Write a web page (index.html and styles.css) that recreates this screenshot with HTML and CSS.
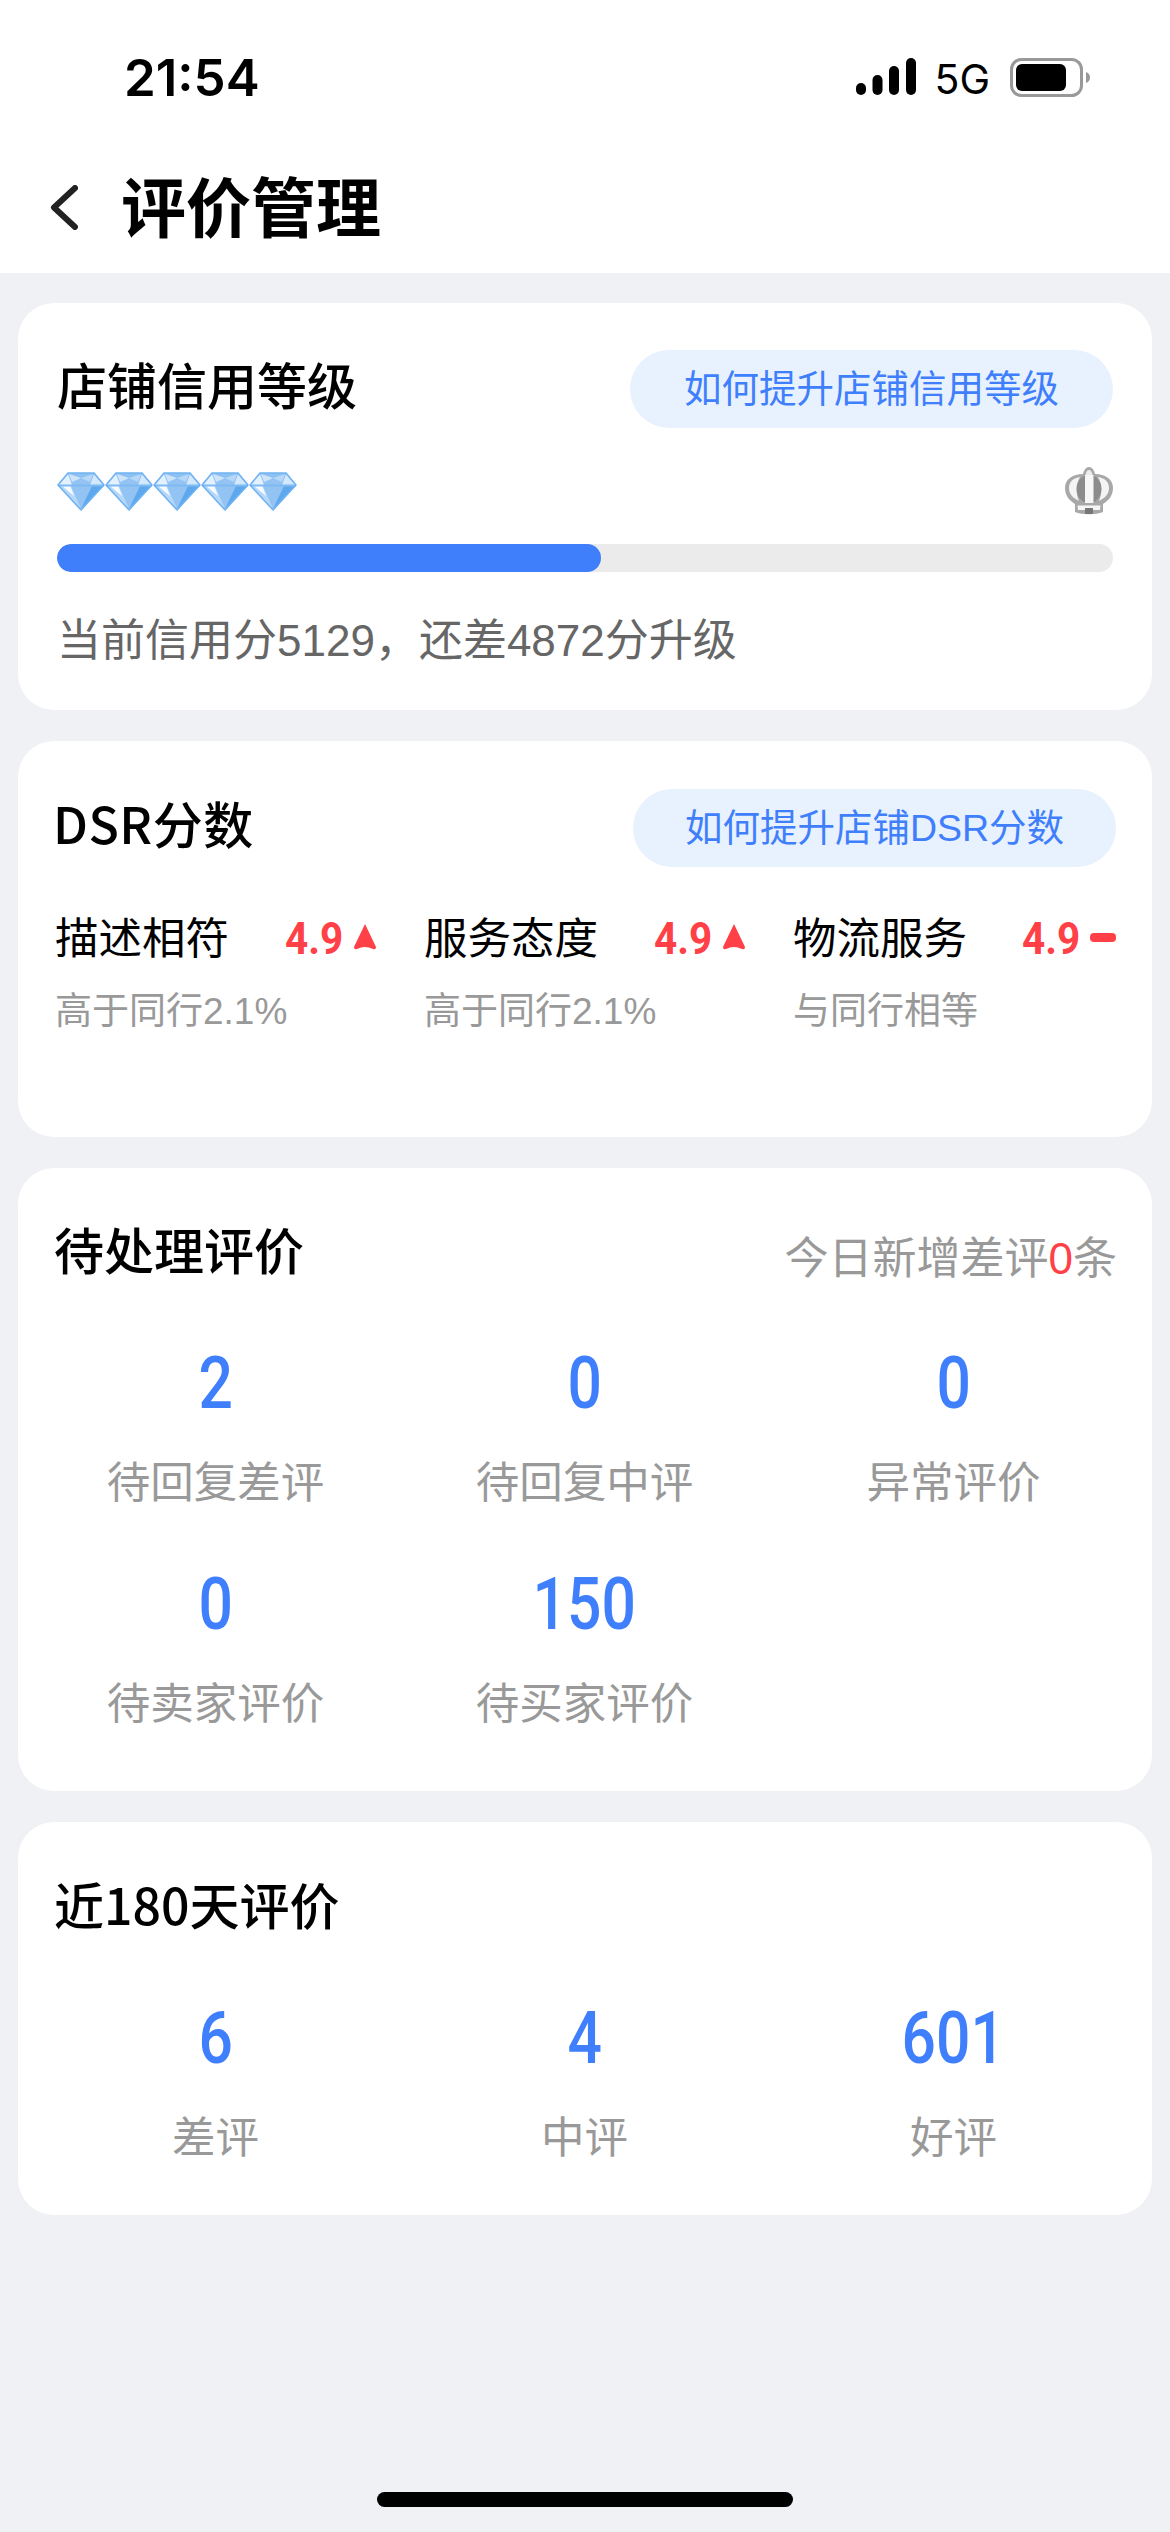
FILE: index.html
```html
<!DOCTYPE html>
<html lang="zh">
<head>
    <meta charset="UTF-8">
    <meta name="viewport" content="width=device-width, initial-scale=1.0">
    <title>评价管理</title>
    <link rel="stylesheet" href="styles.css">
</head>
<body>
    <svg class="defs" width="0" height="0">
        <symbol id="gem" viewBox="0 0 48 39">
            <path d="M11 1H37L47 13L24 38L1 13Z" fill="#93c3f3"/>
            <path d="M2 13L11 2L15 13Z" fill="#e3f1fd"/>
            <path d="M46 13L37 2L33 13Z" fill="#d4e8fb"/>
            <path d="M11 2H37L33 10L24 6L15 10Z" fill="#8fc0f2"/>
            <path d="M15 10L24 6L12 2Z" fill="#cde5fb"/>
            <path d="M33 10L24 6L36 2Z" fill="#b6d8f8"/>
            <path d="M2 14H14L24 37Z" fill="#b7d8f8"/>
            <path d="M4 13H13L17 24Z" fill="#f6fbff"/>
            <path d="M46 14H35L24 37Z" fill="#5fa8ee"/>
            <path d="M1 12.500H47V14.500H1Z" fill="#7fbaf3"/>
            <path d="M11 1H37L47 13L24 38L1 13Z" fill="none" stroke="#6db2f2" stroke-width="1.5" stroke-linejoin="round"/>
        </symbol>
    </svg>

    <header class="top">
        <div class="status-bar">
            <span class="time">21:54</span>
            <div class="status-right">
                <svg class="signal" width="60" height="37" viewBox="0 0 60 37">
                    <rect x="0" y="25" width="10" height="12" rx="5"/>
                    <rect x="16.500" y="17" width="10" height="20" rx="5"/>
                    <rect x="33" y="8" width="10" height="29" rx="5"/>
                    <rect x="50" y="0" width="10" height="37" rx="5"/>
                </svg>
                <span class="net">5G</span>
                <svg class="battery" width="80" height="39" viewBox="0 0 80 39">
                    <rect x="1.500" y="1.500" width="70" height="36" rx="10" fill="none" stroke="#999" stroke-width="3"/>
                    <rect x="6" y="6" width="50" height="27" rx="6" fill="#000"/>
                    <path d="M76 14C79 15 80 17 80 19.500C80 22 79 24 76 25Z" fill="#999"/>
                </svg>
            </div>
        </div>
        <div class="nav">
            <svg class="back" width="28" height="45" viewBox="0 0 28 45">
                <path d="M25 3L4 22.500L25 42" fill="none" stroke="#222" stroke-width="6" stroke-linecap="round" stroke-linejoin="round"/>
            </svg>
            <h1>评价管理</h1>
        </div>
    </header>

    <main class="content">
        <section class="card credit">
            <div class="card-head">
                <h2>店铺信用等级</h2>
                <span class="pill">如何提升店铺信用等级</span>
            </div>
            <div class="level-row">
                <div class="gems">
                    <svg width="48" height="39"><use href="#gem"/></svg>
                    <svg width="48" height="39"><use href="#gem"/></svg>
                    <svg width="48" height="39"><use href="#gem"/></svg>
                    <svg width="48" height="39"><use href="#gem"/></svg>
                    <svg width="48" height="39"><use href="#gem"/></svg>
                </div>
                <svg class="crown" width="48" height="48" viewBox="0 0 48 48">
                    <path d="M24 0C21 0 19 3 18 7C8 7 0 12 0 21C0 29 5 34 10 37L10 45C17 48 31 48 38 45L38 37C43 34 48 29 48 21C48 12 40 7 30 7C29 3 27 0 24 0Z" fill="#a8a8a8"/>
                    <path d="M24 3C22 3 21 5 20.500 8H27.500C27 5 26 3 24 3Z" fill="#ececec"/>
                    <path d="M4 21C4 14 9 11 15 10C11 16 11 28 14 34C8 31 4 27 4 21Z" fill="#f4f4f4"/>
                    <path d="M44 21C44 14 39 11 33 10C37 16 37 28 34 34C40 31 44 27 44 21Z" fill="#f4f4f4"/>
                    <ellipse cx="24" cy="22" rx="12.500" ry="14" fill="#8c8c8c"/>
                    <rect x="20" y="8" width="8.500" height="28" fill="#f6f6f6"/>
                    <path d="M12.500 38.500H35.500L35 43H13Z" fill="#f6f6f6"/>
                    <rect x="20" y="41" width="8" height="6" fill="#777"/>
                </svg>
            </div>
            <div class="progress"><div class="progress-fill" style="width: 51.5%"></div></div>
            <p class="credit-note">当前信用分5129，还差4872分升级</p>
        </section>

        <section class="card dsr">
            <div class="card-head">
                <h2>DSR分数</h2>
                <span class="pill">如何提升店铺DSR分数</span>
            </div>
            <div class="dsr-grid">
                <div class="dsr-item">
                    <div class="dsr-line">
                        <span class="dsr-name">描述相符</span>
                        <span class="dsr-score">4.9</span>
                        <svg class="trend" width="22" height="26" viewBox="0 0 22 26"><path d="M11 0L22 23Q22 26 19 25Q11 21 3 25Q0 26 0 23Z" fill="#ff4046"/></svg>
                    </div>
                    <p class="dsr-sub">高于同行2.1%</p>
                </div>
                <div class="dsr-item">
                    <div class="dsr-line">
                        <span class="dsr-name">服务态度</span>
                        <span class="dsr-score">4.9</span>
                        <svg class="trend" width="22" height="26" viewBox="0 0 22 26"><path d="M11 0L22 23Q22 26 19 25Q11 21 3 25Q0 26 0 23Z" fill="#ff4046"/></svg>
                    </div>
                    <p class="dsr-sub">高于同行2.1%</p>
                </div>
                <div class="dsr-item">
                    <div class="dsr-line">
                        <span class="dsr-name">物流服务</span>
                        <span class="dsr-score">4.9</span>
                        <span class="trend-flat"></span>
                    </div>
                    <p class="dsr-sub">与同行相等</p>
                </div>
            </div>
        </section>

        <section class="card pending">
            <div class="card-head">
                <h2>待处理评价</h2>
                <span class="today">今日新增差评<em>0</em>条</span>
            </div>
            <div class="stats">
                <div class="stat"><b>2</b><span>待回复差评</span></div>
                <div class="stat"><b>0</b><span>待回复中评</span></div>
                <div class="stat"><b>0</b><span>异常评价</span></div>
                <div class="stat"><b>0</b><span>待卖家评价</span></div>
                <div class="stat"><b>150</b><span>待买家评价</span></div>
            </div>
        </section>

        <section class="card recent">
            <div class="card-head">
                <h2>近180天评价</h2>
            </div>
            <div class="stats">
                <div class="stat"><b>6</b><span>差评</span></div>
                <div class="stat"><b>4</b><span>中评</span></div>
                <div class="stat"><b>601</b><span>好评</span></div>
            </div>
        </section>
    </main>

    <div class="home-bar"></div>
</body>
</html>
```

FILE: styles.css
```css
* {
    box-sizing: border-box;
}

body {
    margin: 0;
    height: 2532px;
    display: flex;
    flex-direction: column;
    background: #f0f1f5;
    color: #000;
    font-family: "Liberation Sans", "Noto Sans CJK SC", sans-serif;
}

h1, h2, p {
    margin: 0;
    font-weight: normal;
}

.defs {
    position: absolute;
}

.top {
    height: 273px;
    background: #fff;
}

.status-bar {
    height: 152px;
    padding: 54px 80px 0 124px;
    display: flex;
    justify-content: space-between;
}

.time {
    font-family: Inter, sans-serif;
    font-size: 51px;
    font-weight: 600;
    line-height: 48px;
    height: 48px;
}

.status-right {
    display: flex;
    align-items: flex-start;
    padding-top: 4px;
}

.net {
    font-family: Inter, sans-serif;
    font-size: 41px;
    line-height: 37px;
    margin: 3px 20px 0 18px;
}

.nav {
    display: flex;
    align-items: center;
    padding-left: 50px;
    height: 60px;
    margin-top: 25px;
}

.back {
    margin-right: 43px;
}

h1 {
    font-size: 65px;
    font-weight: 700;
    line-height: 60px;
    padding-top: 5px;
}

.content {
    flex: 1;
    padding: 30px 18px 0;
    display: flex;
    flex-direction: column;
    gap: 31px;
}

.card {
    background: #fff;
    border-radius: 36px;
    padding: 0 36px;
}

.card-head {
    display: flex;
    justify-content: space-between;
    align-items: center;
}

h2 {
    font-family: "Noto Sans CJK SC", sans-serif;
    font-size: 50px;
    font-weight: 500;
    line-height: 50px;
    padding-bottom: 10px;
}

.pill {
    width: 483px;
    height: 78px;
    border-radius: 39px;
    background: #e8f1fe;
    color: #3f7ffb;
    font-size: 37.5px;
    line-height: 78px;
    text-align: center;
}

.credit {
    height: 407px;
    padding: 47px 39px 0;
}

.credit h2 {
    margin-top: -3px;
}

.level-row {
    display: flex;
    justify-content: space-between;
    align-items: center;
    margin-top: 39px;
}

.gems {
    display: flex;
}

.gems svg {
    display: block;
}

.progress {
    height: 28px;
    margin-top: 29px;
    border-radius: 14px;
    background: #ebebeb;
    overflow: hidden;
}

.progress-fill {
    height: 100%;
    border-radius: 14px;
    background: #3f7ffb;
}

.credit-note {
    margin-top: 39px;
    font-size: 44px;
    line-height: 60px;
    color: #666;
}

.dsr {
    height: 396px;
    padding: 48px 36px 0 37px;
}

.dsr h2 {
    margin: -3px 0 0 -2px;
    letter-spacing: 0.5px;
}

.dsr-grid {
    display: grid;
    grid-template-columns: repeat(3, 369px);
    margin-top: 42px;
}

.dsr-line {
    display: flex;
    align-items: center;
    width: 323px;
    height: 60px;
}

.dsr-name {
    flex: 1;
    font-size: 43.5px;
    line-height: 60px;
}

.dsr-score,
.stat b {
    display: inline-block;
    font-family: Roboto, sans-serif;
}

.dsr-score {
    font-size: 44px;
    font-weight: 700;
    color: #ff4046;
    transform: scaleX(0.92);
    transform-origin: right center;
}

.trend {
    margin: 0 2px 4px 11px;
}

.trend-flat {
    width: 26px;
    height: 9px;
    margin: 0 0 4px 10px;
    border-radius: 4px;
    background: #ff4046;
}

.dsr-sub {
    margin-top: 17px;
    font-size: 37px;
    line-height: 52px;
    color: #999;
}

.pending {
    height: 623px;
    padding: 55px 35px 0 36px;
}

.today {
    height: 60px;
    font-size: 44px;
    line-height: 72px;
    color: #999;
}

.today em {
    font-style: normal;
    color: #ff4046;
}

.stats {
    display: grid;
    grid-template-columns: repeat(3, 369px);
    margin: 60px -23px 0;
}

.stat {
    height: 221px;
    display: flex;
    flex-direction: column;
    align-items: center;
}

.stat b {
    font-size: 73px;
    font-weight: 500;
    line-height: 80px;
    color: #3f7ffb;
    transform: scaleX(0.83);
}

.stat span {
    margin-top: 30px;
    font-size: 43.5px;
    line-height: 60px;
    color: #999;
}

.recent {
    height: 393px;
    padding-top: 56px;
}

.home-bar {
    width: 416px;
    height: 15px;
    margin: 0 auto 25px;
    border-radius: 8px;
    background: #000;
}
```
